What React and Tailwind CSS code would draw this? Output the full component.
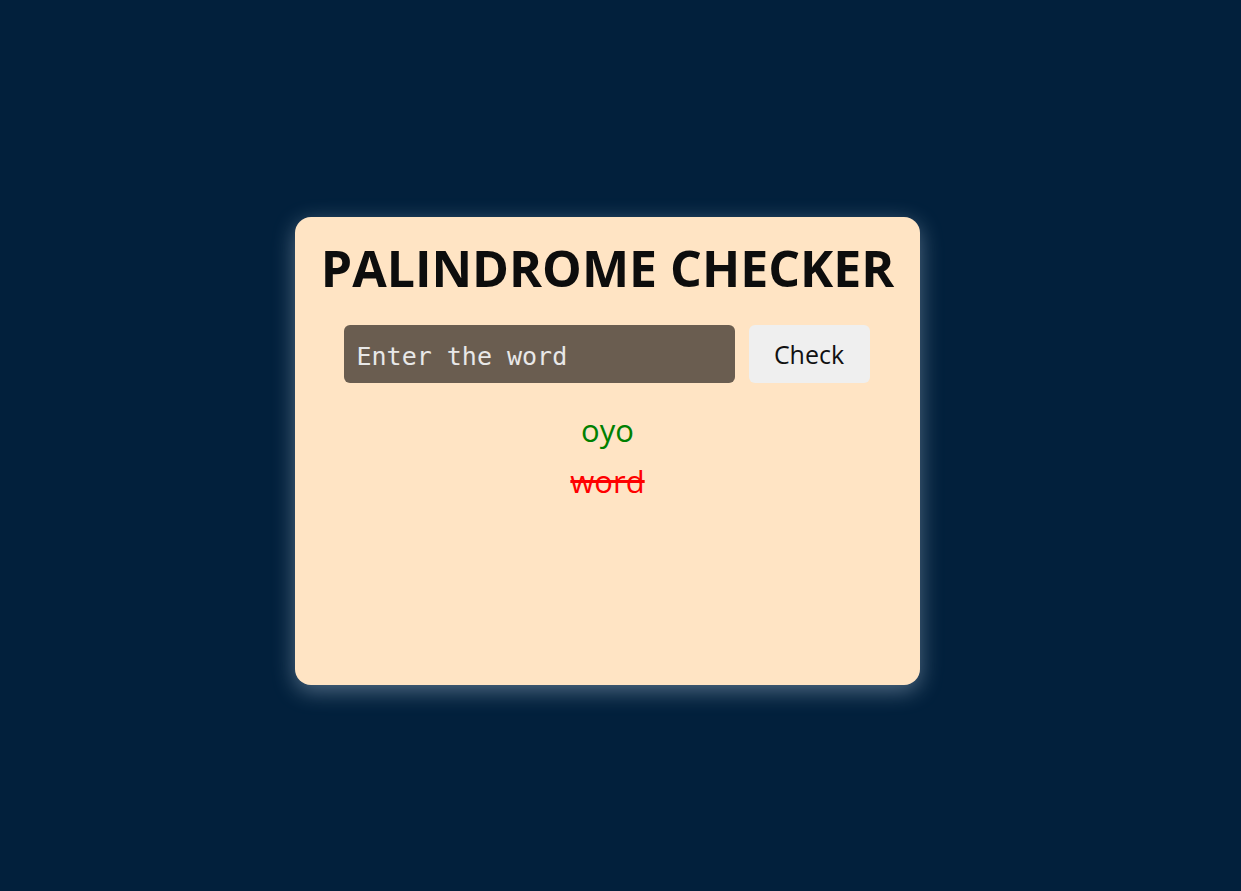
import React from 'react';

const App = () => {
  return (
    <div className="flex min-h-screen items-center justify-center bg-[#02203c] pr-[26px] pt-[10px] font-['Open_Sans',sans-serif]">
      <div className="flex h-[468px] w-[625px] flex-col items-center rounded-2xl bg-[#ffe4c4] pt-[21px] shadow-[0_6px_22px_rgba(180,200,220,0.45)]">
        <h1 className="text-[50px] font-bold leading-[60px] text-[#0d0d0d]">PALINDROME CHECKER</h1>
        <div className="mt-[27px] flex gap-[14px] pr-[2px]">
          <input
            type="text"
            placeholder="Enter the word"
            className="h-[58px] w-[391px] rounded-md bg-[#6a5d50] px-[13px] pt-[5px] font-['DejaVu_Sans_Mono',monospace] text-[25px] text-[#eeeeee] outline-none placeholder:text-[#e8e8e8]"
          />
          <button className="h-[58px] w-[121px] rounded-md bg-[#efefef] pt-[3px] text-[25px] text-[#111]">Check</button>
        </div>
        <div className="mt-[25px] flex flex-col items-center gap-[7px] text-[31px]">
          <p className="leading-[44px] text-[#008000]">oyo</p>
          <p className="leading-[44px] text-[#ff0000] line-through">word</p>
        </div>
      </div>
    </div>
  );
};

export default App;
